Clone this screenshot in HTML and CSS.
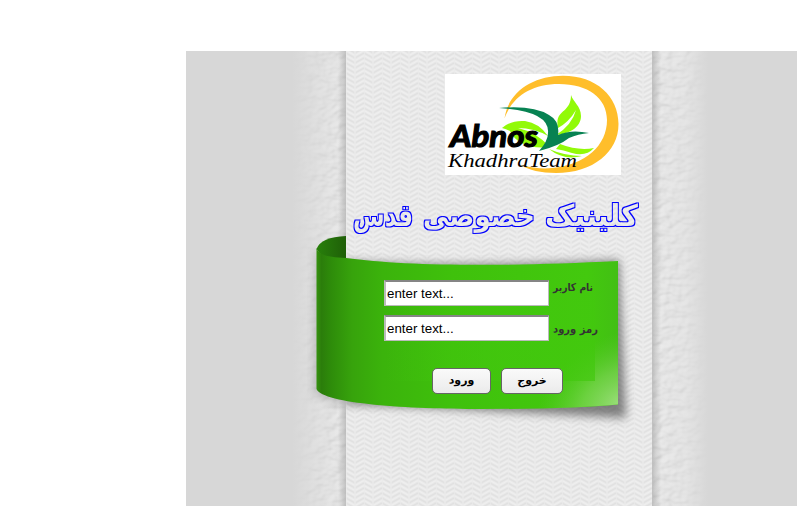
FILE: index.html
```
<!DOCTYPE html>
<html lang="fa">
<head>
<meta charset="utf-8">
<title>كلينيک خصوصى قدس</title>
<link rel="stylesheet" href="styles.css">
</head>
<body>
<main class="stage">
  <svg class="backdrop" viewBox="186 51 611 455" aria-hidden="true">
    <defs>
      <pattern id="weave" x="346" y="51" width="18" height="5" patternUnits="userSpaceOnUse">
        <rect width="18" height="5" fill="#e9e9e9"/>
        <path d="M0 -3L9 2L18 -3M0 2L9 7L18 2" fill="none" stroke="#e1e1e1" stroke-width="1.3"/>
        <path d="M0 -.5L9 4.5L18 -.5M0 4.5L9 9.5L18 4.5" fill="none" stroke="#efefef" stroke-width="1.3"/>
        <path d="M0 0V5M9 0V5" stroke="#ebebeb" stroke-width="1.5"/>
      </pattern>
      <filter id="plaster" x="0" y="0" width="1" height="1" color-interpolation-filters="sRGB">
        <feTurbulence type="fractalNoise" baseFrequency=".1 .14" numOctaves="2" seed="8"/>
        <feColorMatrix values="0 0 0 0 0  0 0 0 0 0  0 0 0 0 0  1 0 0 0 0"/>
        <feDiffuseLighting surfaceScale="1.4" lighting-color="#ececec" diffuseConstant="1.1">
          <feDistantLight azimuth="225" elevation="66"/>
        </feDiffuseLighting>
        <feComposite in2="SourceAlpha" operator="in"/>
      </filter>
      <linearGradient id="fadeL"><stop stop-color="#d7d7d7"/><stop offset=".3" stop-color="#dadada" stop-opacity=".9"/><stop offset="1" stop-color="#e0e0e0" stop-opacity=".65"/></linearGradient>
      <linearGradient id="fadeR"><stop stop-color="#e1e1e1" stop-opacity=".65"/><stop offset=".6" stop-color="#dfdfdf" stop-opacity=".8"/><stop offset="1" stop-color="#d7d7d7"/></linearGradient>
      <linearGradient id="edgeL"><stop stop-color="#999" stop-opacity="0"/><stop offset="1" stop-color="#999" stop-opacity=".5"/></linearGradient>
      <linearGradient id="edgeR"><stop stop-color="#888" stop-opacity=".45"/><stop offset="1" stop-color="#999" stop-opacity="0"/></linearGradient>
      <linearGradient id="ribbon" gradientUnits="userSpaceOnUse" x1="316" y1="0" x2="618" y2="0">
        <stop stop-color="#36940f"/><stop offset=".018" stop-color="#2b7d0b"/><stop offset=".05" stop-color="#2e8c0a"/><stop offset=".12" stop-color="#37a30c"/><stop offset=".22" stop-color="#3bb30c"/><stop offset=".45" stop-color="#3fc10c"/><stop offset=".9" stop-color="#43c90e"/><stop offset="1" stop-color="#42bf14"/>
      </linearGradient>
      <linearGradient id="fold" x1="0" y1="0" x2="1" y2="0"><stop stop-color="#28800b"/><stop offset="1" stop-color="#1f5f08"/></linearGradient>
      <radialGradient id="shine" gradientUnits="userSpaceOnUse" cx="0" cy="0" r="1" gradientTransform="translate(618 402) rotate(-35) scale(90 64)"><stop stop-color="#a0e080" stop-opacity=".9"/><stop offset=".45" stop-color="#86d75f" stop-opacity=".6"/><stop offset="1" stop-color="#60c936" stop-opacity="0"/></radialGradient>
      <linearGradient id="panel" x1="0" x2="1"><stop stop-color="#42c80e" stop-opacity="0"/><stop offset=".5" stop-color="#42c80e" stop-opacity=".5"/><stop offset="1" stop-color="#42c80e" stop-opacity=".7"/></linearGradient>
      <filter id="soft" x="-.2" y="-.2" width="1.4" height="1.4"><feGaussianBlur stdDeviation="5"/></filter>
      <clipPath id="center"><rect x="346" y="51" width="307" height="455"/></clipPath>
    </defs>
    <rect x="186" y="51" width="611" height="455" fill="#d7d7d7"/>
    <rect x="292" y="51" width="54" height="455" filter="url(#plaster)"/>
    <rect x="292" y="51" width="54" height="455" fill="url(#fadeL)"/>
    <rect x="653" y="51" width="55" height="455" filter="url(#plaster)"/>
    <rect x="653" y="51" width="55" height="455" fill="url(#fadeR)"/>
    <rect x="338" y="51" width="8" height="455" fill="url(#edgeL)"/>
    <rect x="346" y="51" width="307" height="455" fill="url(#weave)"/>
    <rect x="652" y="51" width="9" height="455" fill="url(#edgeR)"/>
    <path d="M316 250Q330 264 346 264V405Q326 400 314 393Z" fill="#777" opacity=".4" filter="url(#soft)"/>
    <g clip-path="url(#center)"><path d="M346 261Q440 268 619 260L626 418Q480 410 346 404Z" fill="#444" opacity=".65" filter="url(#soft)"/></g>
    <path d="M316.500 249Q321 237 346 236V266Q324 262 316.500 249Z" fill="url(#fold)"/>
    <path d="M316.500 248C319 256 330 257 346 258C405 266 500 267 618 261V404.500Q570 409 480 409C410 409 323 404 316.500 389Z" fill="url(#ribbon)"/>
    <path d="M500 300H618V404.500Q570 409 500 409Z" fill="url(#shine)"/>
    <path d="M385 290H595V381H385Z" fill="url(#panel)"/>
  </svg>

  <section class="login">
    <svg class="logo" viewBox="0 0 176 101" role="img" aria-label="Abnos Khadhra Team">
      <rect width="176" height="101" fill="#fff"/>
      <path d="M59.500 44.500C63 18 88 1.700 118 1.700C151 1.700 173.500 22 173.500 50C173.500 78 148 99 111 99C96 99 84 96 75 91C88 94 98 95 107 94C141 91 162 71 162 46C162 24 143 10 114 10C86 10 67 23 59.500 44.500Z" fill="#ffbe2b"/>
      <path d="M126 21C128 28 136 32 136 42C136 54 123 60 111 61Q127 51 131 36Q124 48 113 54C109 35 126 40 126 21ZM57 54Q66 46 80 47Q94 49 103 62Q89 54 73 54Q91 58 105 73Q74 76 65 57Q61 55 57 54ZM115 70Q133 77 149 74Q141 83 127 79Q118 76 111 75ZM104 75Q120 82 137 82Q119 87 104 75Z" fill="#92fa08"/>
      <path d="M54 34Q88 31 104 41Q115 47 113 61Q126 55 144 59Q133 60 124 64Q114 72 94 77Q103 67 103 59Q105 37 54 34Z" fill="#078252"/>
      <text x="5" y="73" textLength="88" lengthAdjust="spacingAndGlyphs" class="logo-name">Abnos</text>
      <text x="3" y="93" textLength="129" lengthAdjust="spacingAndGlyphs" class="logo-team">KhadhraTeam</text>
    </svg>

    <h1 class="title">
      <svg class="title-art" viewBox="0 0 292 48">
        <defs>
          <filter id="outline" x="-.1" y="-.2" width="1.2" height="1.4" color-interpolation-filters="sRGB">
            <feMorphology in="SourceAlpha" operator="dilate" radius="1" result="grown"/>
            <feFlood flood-color="#00f"/>
            <feComposite in2="grown" operator="in"/>
            <feComposite in2="SourceAlpha" operator="out"/>
          </filter>
        </defs>
        <g filter="url(#outline)" direction="rtl">
          <text x="287" y="31" textLength="93" lengthAdjust="spacingAndGlyphs">كلينيک</text>
          <text x="184" y="31" textLength="112" lengthAdjust="spacingAndGlyphs">خصوصى</text>
          <text x="62" y="31" textLength="60" lengthAdjust="spacingAndGlyphs">قدس</text>
        </g>
      </svg>
    </h1>

    <form class="form">
      <div class="row">
        <input class="field" type="text" value="enter text..." aria-label="نام كاربر">
        <svg class="label" viewBox="0 0 46 26"><text x="40" y="11" direction="rtl" textLength="40" lengthAdjust="spacingAndGlyphs">نام كاربر</text></svg>
      </div>
      <div class="row">
        <input class="field" type="text" value="enter text..." aria-label="رمز ورود">
        <svg class="label" viewBox="0 0 46 26"><text x="45" y="18" direction="rtl" textLength="45" lengthAdjust="spacingAndGlyphs">رمز ورود</text></svg>
      </div>
      <div class="actions">
        <button class="button enter" type="button">ورود</button>
        <button class="button exit" type="button">خروج</button>
      </div>
    </form>
  </section>
</main>
</body>
</html>
```

FILE: styles.css
```
* { box-sizing: border-box; }

body {
  margin: 0;
  background: #fff;
  font-family: "Liberation Sans", "DejaVu Sans", sans-serif;
  overflow: hidden;
}

.stage {
  position: relative;
  width: 611px;
  height: 455px;
  margin: 51px 0 0 186px;
}

.backdrop {
  position: absolute;
  inset: 0;
  width: 611px;
  height: 455px;
}

.login {
  position: relative;
  display: flex;
  flex-direction: column;
  width: 307px;
  margin-left: 160px;
  padding-top: 23px;
}

.logo {
  width: 176px;
  height: 101px;
  margin-left: 99px;
}

.logo-name {
  font: italic bold 30px "Lato", sans-serif;
  fill: #000;
  stroke: #000;
  stroke-width: 1.2px;
}

.logo-team {
  font: italic 18px "Liberation Serif", serif;
  fill: #000;
}

.title {
  width: 292px;
  height: 48px;
  margin: 20px 0 0 5px;
}

.title-art {
  display: block;
  overflow: visible;
  width: 292px;
  height: 48px;
  font: bold 30px "DejaVu Sans", sans-serif;
}

.form {
  display: flex;
  flex-direction: column;
  gap: 9px;
  margin: 37px 0 0 38px;
}

.row {
  display: flex;
  gap: 4px;
  height: 26px;
}

.field {
  width: 165px;
  height: 26px;
  padding: 0 2px 0 1px;
  border: 2px solid #bbb;
  border-top-color: #858585;
  border-right-width: 1px;
  border-bottom-width: 1px;
  background: #fff;
  color: #000;
  font: 13.33px "Liberation Sans", sans-serif;
}

.label {
  width: 46px;
  height: 26px;
  overflow: visible;
  fill: #333;
  font: bold 11px "DejaVu Sans", sans-serif;
}

.actions {
  display: flex;
  gap: 10px;
  margin: 18px 0 0 48px;
}

.button {
  height: 26px;
  padding: 0 0 2px;
  border: 1px solid #666;
  border-radius: 5px;
  background: linear-gradient(#fafafa, #ebebeb);
  color: #000;
  font: bold 11px "DejaVu Sans", sans-serif;
}

.enter { width: 59px; }
.exit { width: 62px; }
```
